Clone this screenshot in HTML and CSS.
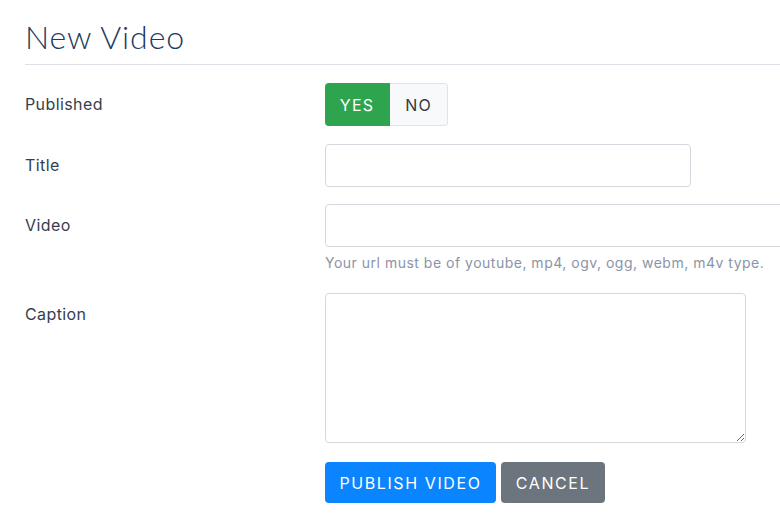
FILE: index.html
```html
<!DOCTYPE html>
<html lang="en">
<head>
    <meta charset="UTF-8">
    <meta name="viewport" content="width=device-width, initial-scale=1.0">
    <title>New Video</title>
    <link rel="stylesheet" href="styles.css">
</head>
<body>
    <div class="page">
        <!-- Header -->
        <h1 class="page-title">New Video</h1>

        <!-- Form -->
        <form class="video-form">
            <div class="form-row row-published">
                <label class="form-label">Published</label>
                <div class="toggle">
                    <button type="button" class="toggle-btn active">YES</button>
                    <button type="button" class="toggle-btn">NO</button>
                </div>
            </div>

            <div class="form-row row-title">
                <label class="form-label" for="title">Title</label>
                <input type="text" id="title" class="input input-title">
            </div>

            <div class="form-row row-video">
                <label class="form-label" for="video">Video</label>
                <div>
                    <input type="text" id="video" class="input input-video">
                    <p class="help">Your url must be of youtube, mp4, ogv, ogg, webm, m4v type.</p>
                </div>
            </div>

            <div class="form-row row-caption">
                <label class="form-label" for="caption">Caption</label>
                <textarea id="caption" class="input input-caption"></textarea>
            </div>

            <div class="form-row">
                <span></span>
                <div class="actions">
                    <button type="submit" class="btn btn-primary">Publish Video</button>
                    <button type="button" class="btn btn-secondary">Cancel</button>
                </div>
            </div>
        </form>
    </div>
</body>
</html>
```

FILE: styles.css
```css
/* General Styles */
body {
    margin: 0;
    font-family: Inter, "Noto Sans", sans-serif;
    font-size: 16px;
    color: #343e4e;
    background-color: #fff;
    overflow: hidden;
}

.page {
    padding: 18px 0 0 25px;
}

/* Header */
.page-title {
    margin: 0;
    padding-bottom: 9px;
    font-family: Lato, sans-serif;
    font-weight: 300;
    font-size: 32px;
    line-height: 37px;
    letter-spacing: 0.9px;
    color: #1e3a5f;
    border-bottom: 1px solid #dde1e7;
}

/* Form rows */
.video-form {
    padding-top: 18px;
}

.form-row {
    display: grid;
    grid-template-columns: 300px 1fr;
    align-items: start;
    margin-bottom: 18px;
}

.row-title {
    margin-bottom: 17px;
}

.row-video {
    margin-bottom: 20px;
}

.row-caption {
    margin-bottom: 19px;
}

.form-label {
    padding-top: 9px;
    line-height: 24px;
    letter-spacing: 0.4px;
    color: #343e4e;
}

/* Published toggle */
.toggle {
    display: flex;
}

.toggle-btn {
    width: 58px;
    height: 43px;
    padding: 0;
    font-family: Inter, sans-serif;
    font-size: 16px;
    letter-spacing: 1.2px;
    color: #343a40;
    background-color: #f8f9fa;
    border: 1px solid #dfe3e8;
    border-left: none;
    border-radius: 0 4px 4px 0;
}

.toggle-btn.active {
    width: 65px;
    color: #fff;
    background-color: #2ea44f;
    border-color: #2ea44f;
    border-radius: 4px 0 0 4px;
}

/* Inputs */
.input {
    display: block;
    box-sizing: border-box;
    height: 43px;
    border: 1px solid #d3d8de;
    border-radius: 4px;
    font-family: Inter, sans-serif;
    font-size: 16px;
    background: #fff;
}

.input-title {
    width: 366px;
}

.input-video {
    width: 480px;
}

.input-caption {
    width: 421px;
    height: 150px;
    resize: vertical;
}

.help {
    margin: 5px 0 0;
    font-size: 14px;
    line-height: 21px;
    letter-spacing: 0.5px;
    color: #8a94a6;
}

/* Buttons */
.actions {
    display: flex;
    gap: 5px;
}

.btn {
    height: 41px;
    padding: 0 14px;
    font-family: Inter, sans-serif;
    font-size: 16px;
    letter-spacing: 1.6px;
    text-transform: uppercase;
    color: #fff;
    border: none;
    border-radius: 4px;
}

.btn-primary {
    width: 171px;
    background-color: #0a84ff;
}

.btn-secondary {
    width: 104px;
    background-color: #6c757d;
}
```
